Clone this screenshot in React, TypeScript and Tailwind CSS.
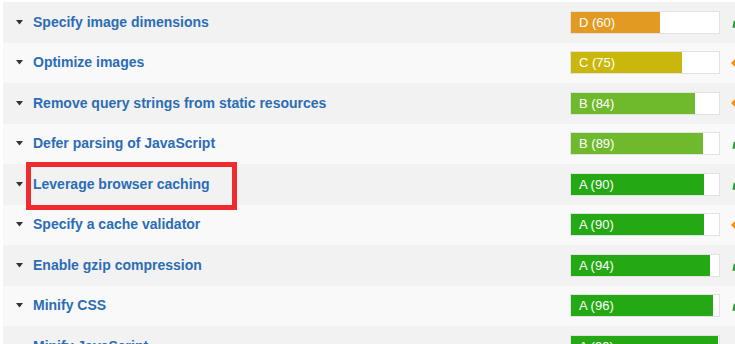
import React from "react";

type Row = { label: string; grade: string; score: number; color: string; arrow: "up" | "side" };

const rows: Row[] = [
  { label: "Specify image dimensions", grade: "D", score: 60, color: "#e39a23", arrow: "up" },
  { label: "Optimize images", grade: "C", score: 75, color: "#c9b80b", arrow: "side" },
  { label: "Remove query strings from static resources", grade: "B", score: 84, color: "#6fb92d", arrow: "side" },
  { label: "Defer parsing of JavaScript", grade: "B", score: 89, color: "#6fb92d", arrow: "up" },
  { label: "Leverage browser caching", grade: "A", score: 90, color: "#24a914", arrow: "up" },
  { label: "Specify a cache validator", grade: "A", score: 90, color: "#24a914", arrow: "side" },
  { label: "Enable gzip compression", grade: "A", score: 94, color: "#24a914", arrow: "up" },
  { label: "Minify CSS", grade: "A", score: 96, color: "#24a914", arrow: "up" },
  { label: "Minify JavaScript", grade: "A", score: 99, color: "#24a914", arrow: "up" },
];

function Arrow({ kind }: { kind: "up" | "side" }) {
  if (kind === "up") {
    return (
      <svg width="12" height="12" viewBox="0 0 12 12" className="mt-[3px] shrink-0 overflow-visible">
        <path d="M0 6 L6 1 L6 4 L12 4 L12 8 L6 8 L6 11 Z" fill="#2f9a3a" transform="rotate(-40 6 6)" />
      </svg>
    );
  }
  return (
    <svg width="12" height="12" viewBox="0 0 12 12" className="shrink-0">
      <path d="M0 6 L5 1 L5 4 L12 4 L12 8 L5 8 L5 11 Z" fill="#f39018" />
    </svg>
  );
}

export default function App() {
  return (
    <div
      className="relative w-[735px] h-[344px] overflow-hidden bg-white pt-[2px] pl-[3px]"
      style={{ fontFamily: '"Liberation Sans", Arial, sans-serif' }}
    >
      {rows.map((r, i) => (
        <div
          key={r.label}
          className={`flex h-[40.5px] items-center ${i % 2 === 0 ? "bg-[#f2f2f2]" : "bg-[#f9f9f9]"} pl-[13px]`}
        >
          <svg width="7" height="5" viewBox="0 0 7 5" className="shrink-0">
            <path d="M0 0 L7 0 L3.5 4.5 Z" fill="#333333" />
          </svg>
          <span className="ml-[10px] flex-1 text-[14px] font-bold text-[#2b6db5] whitespace-nowrap">{r.label}</span>
          <div className="relative h-[23px] w-[150px] shrink-0 border border-[#e2e2e2] bg-white">
            <div className="h-full" style={{ width: `${r.score}%`, backgroundColor: r.color }} />
            <span className="absolute left-[8px] top-0 flex h-full items-center text-[13px] text-white">
              {r.grade} ({r.score})
            </span>
          </div>
          <div className="ml-[11px] flex w-[4px] shrink-0 items-center overflow-visible">
            <Arrow kind={r.arrow} />
          </div>
        </div>
      ))}
      <div className="absolute left-[26px] top-[162px] h-[48px] w-[211px] border-[5px] border-[#ef2b30]" />
    </div>
  );
}
